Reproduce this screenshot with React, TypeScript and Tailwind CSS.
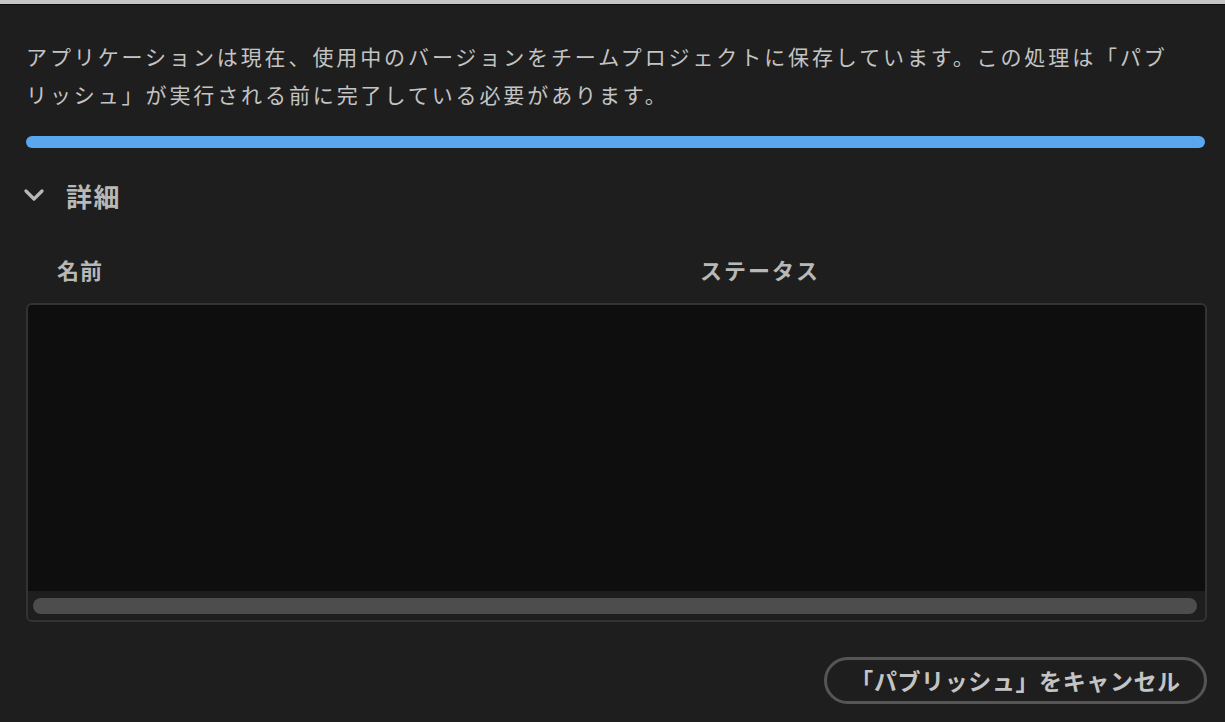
const jp = { fontFamily: '"Noto Sans CJK JP", "Noto Sans", sans-serif' };

export default function App() {
  return (
    <div className="w-[1225px] h-[722px] bg-[#1e1e1e] overflow-hidden flex flex-col" style={jp}>
      <div className="h-[4px] bg-[#c6c6c6] shrink-0" />
      <div className="h-[1px] bg-[#0c0c0c] shrink-0" />

      <div className="flex flex-col pl-[26px] pr-[18px]">
        <p className="mt-[32px] w-[1152px] text-[21px] leading-[38px] tracking-[2.9px] text-[#c4c4c4]">
          アプリケーションは現在、使用中のバージョンをチームプロジェクトに保存しています。この処理は「パブリッシュ」が実行される前に完了している必要があります。
        </p>

        <div className="mt-[23px] mr-[2px] h-[12px] rounded-full bg-[#5aa6ef]" />

        <div className="mt-[32px] flex items-center h-[30px]">
          <svg width="20" height="12" viewBox="0 0 20 12" className="-ml-[2px]">
            <polyline points="2,2 10,10 18,2" fill="none" stroke="#b8b8b8" strokeWidth="3.2" strokeLinecap="round" strokeLinejoin="round" />
          </svg>
          <span className="ml-[22px] text-[26px] font-bold text-[#b8b8b8] tracking-[1.5px]">詳細</span>
        </div>

        <div className="mt-[44px] flex items-center h-[30px] text-[22px] font-bold text-[#b8b8b8]">
          <span className="ml-[31px] w-[643px] tracking-[1px]">名前</span>
          <span className="tracking-[2px]">ステータス</span>
        </div>

        <div className="mt-[19px] h-[319px] border-2 border-[#333333] rounded-[6px] bg-[#1e1e1e] flex flex-col overflow-hidden">
          <div className="h-[286px] bg-[#0e0e0e]" />
          <div className="flex-1 px-[5px] pt-[7px]">
            <div className="h-[16px] rounded-full bg-[#4d4d4d] mr-[3px]" />
          </div>
        </div>

        <div className="mt-[35px] flex justify-end">
          <button className="h-[47px] w-[383px] rounded-full border-[3px] border-[#555555] text-[23px] font-bold text-[#c4c4c4] tracking-[0.6px] flex items-center justify-center">
            「パブリッシュ」をキャンセル
          </button>
        </div>
      </div>
    </div>
  );
}
